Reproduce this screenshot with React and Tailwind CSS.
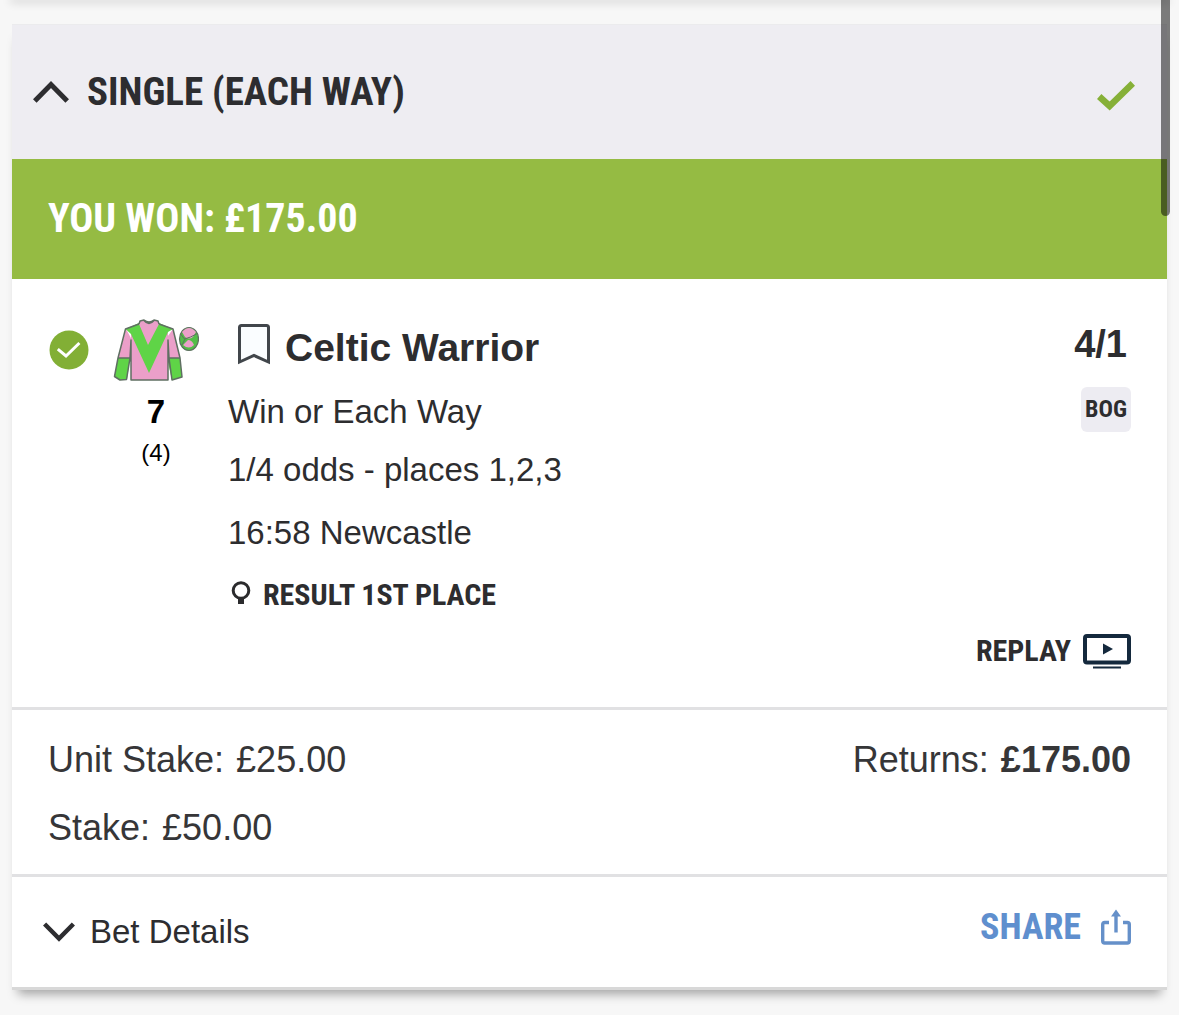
const condensed = "font-['Roboto_Condensed','Liberation_Sans_Narrow',Roboto,sans-serif] font-bold";

const Chevron = ({ className }) => (
  <svg viewBox="0 0 36 22" className={className} fill="none" stroke="currentColor" strokeWidth="5">
    <path d="M1.8 20 18 3.6 34.2 20" />
  </svg>
);

const Tick = () => (
  <svg viewBox="0 0 38 30" className="h-[30px] w-[38px]" fill="none" stroke="#86b038" strokeWidth="6.5">
    <path d="M2.2 15.5 12.6 25 35.8 2.4" />
  </svg>
);

const WonIcon = () => (
  <svg viewBox="0 0 40 40" className="size-10">
    <circle cx="20" cy="20" r="19.5" fill="#82af35" />
    <path d="M8.8 19.2 17 26 30.4 13" fill="none" stroke="#fff" strokeWidth="3" />
  </svg>
);

const Silks = () => (
  <svg viewBox="0 0 86 62" className="h-[62px] w-[86px]" strokeLinejoin="round">
    {/* sleeves and cuffs */}
    <path d="M13 10 5 39h12l2-18zM60 10l7 29H54l-2-18z" fill="#eb9fc9" />
    <path d="M5 39h12l-3 21.500-7 .5-5.500-3.500zM54 39h13l2 19-10 3z" fill="#5fd447" />
    {/* body with the chevron */}
    <path d="M18 10 26 4h20l9 6v51H18z" fill="#eb9fc9" />
    <path d="M12.500 10 26 4l9 20L46 4l14 6-5 3-19 41L18 15z" fill="#5fd447" />
    <path d="m27 2 4-1q5 4 10 0l4 1 1 3-11 21L26 5z" fill="#eb9fc9" />
    <g fill="none" stroke="#5f6f62" strokeWidth="1.5">
      <path d="M26 5 12.500 10 5 39 1.500 57.500l5.500 3.500 6.500-.5L17 39l1-18v40h37V21l1 18 3 22 10-3-2-19-7-29-14-5" />
      <path d="m26 5 1-3 4-1q5 4 10 0l4 1 1 3M31 1.500q5 6 10 0M5 39h12M55 39h12" />
    </g>
    {/* cap */}
    <ellipse cx="76" cy="20" rx="9.500" ry="11.500" fill="#52bd47" stroke="#5f6f62" strokeWidth="1.2" />
    <path d="M69 13q7-8 14 0l-3 5q-4 3-8 0zM70 26l5-5q4 0 6 5-5 5-11 0z" fill="#eb9fc9" />
    <path d="m67.500 15 4 5 6-2 6-3M72 20l-3 6" fill="none" stroke="#5f6f62" strokeWidth="1" />
  </svg>
);

const Bookmark = () => (
  <svg viewBox="0 0 34 42" className="h-[42px] w-[34px]" fill="#fafdff" stroke="#41464b" strokeWidth="3">
    <path d="M2.500 39V4.500q0-2 2-2h25q2 0 2 2V39L17 32.500z" />
  </svg>
);

const ResultPin = () => (
  <svg viewBox="0 0 20 24" className="mb-1 h-6 w-5" fill="none" stroke="#2b2b2d">
    <circle cx="10" cy="9.500" r="7.8" strokeWidth="3" />
    <path d="M10 17v6" strokeWidth="6" />
  </svg>
);

const ReplayIcon = () => (
  <svg viewBox="0 0 48 36" className="h-9 w-12" fill="none" stroke="#14293d">
    <rect x="2" y="3" width="44" height="26.500" rx="2" strokeWidth="4" />
    <path d="M10 34.500h28" strokeWidth="2" />
    <path d="m20 10.500 10 5.500-10 5.500z" fill="#14293d" stroke="none" />
  </svg>
);

const ShareIcon = () => (
  <svg viewBox="0 0 30 36" className="h-9 w-[30px]" fill="none" stroke="#6590c9" strokeWidth="3.400">
    <path d="M8 13.500H3.700q-2 0-2 2V32q0 2 2 2h22.600q2 0 2-2V15.500q0-2-2-2H22M15 23.500V6" />
    <path d="M15 .5 20 7.500H10z" fill="#6590c9" stroke="none" />
  </svg>
);

const Amount = ({ label, value, strong }) => (
  <div className="flex gap-3">
    <dt>{label}</dt>
    <dd className={strong ? "font-bold" : ""}>{value}</dd>
  </div>
);

const Selection = () => (
  <section className="grid grid-cols-[40px_86px_1fr_auto] border-b-3 border-[#e1e1e3] pt-10 pr-9 pb-[38px] pl-[37px]">
    <div className="pt-[11px]">
      <WonIcon />
    </div>

    <div className="ml-6 flex w-[86px] flex-col items-center text-black">
      <Silks />
      <p className="text-[33px] leading-[62px] font-bold">7</p>
      <p className="text-2xl leading-5">(4)</p>
    </div>

    <div className="ml-[53px] text-[33px] text-[#2d2d2f]">
      <div className="flex items-start gap-3.5 pt-1 pl-[9px]">
        <button type="button" aria-label="Save selection">
          <Bookmark />
        </button>
        <h3 className="text-[39px] leading-[50px] font-bold">Celtic Warrior</h3>
      </div>
      <p className="pt-2 leading-[62px]">Win or Each Way</p>
      <p className="leading-[54px]">1/4 odds - places 1,2,3</p>
      <p className="pt-1 leading-[64px]">16:58 Newcastle</p>
      <div className="flex items-center gap-3 pl-[3px]">
        <ResultPin />
        <p className={`${condensed} text-[30px] leading-[60px]`}>RESULT 1ST PLACE</p>
      </div>
    </div>

    <div className="flex flex-col items-end text-[#2d2d2f]">
      <p className="pr-1 text-[38px] leading-[50px] font-bold">4/1</p>
      <span className={`${condensed} mt-[18px] rounded-md bg-[#edecf2] px-1 text-2xl leading-[45px]`}>BOG</span>
    </div>

    <button type="button" className={`${condensed} col-span-4 mt-2 flex items-center gap-3 justify-self-end text-[30px] leading-9 text-[#2d2d2f]`}>
      REPLAY
      <ReplayIcon />
    </button>
  </section>
);

const App = () => {
  return (
    <div className="relative min-h-screen bg-[#f7f7f7] font-['Liberation_Sans',Arial,sans-serif]">
      <div className="mx-3 shadow-[0_0_10px_2px_rgba(0,0,0,0.2)]" />
      <div className="px-3 pt-6">
        <main className="border-b-3 border-[#d8d8d8] bg-white shadow-[0_10px_10px_-6px_rgba(0,0,0,0.35)]">
          <header className="border-t border-[#ebebed] bg-[#eeedf2]">
            <button type="button" aria-expanded="true" className="flex w-full items-center gap-[18px] pr-8 pl-[21px] text-[#2d2d30]">
              <Chevron className="h-[22px] w-9" />
              <span className={`${condensed} flex-1 text-left text-[39px] leading-[134px]`}>SINGLE (EACH WAY)</span>
              <span className="pt-2">
                <Tick />
              </span>
            </button>
          </header>

          <p className={`${condensed} bg-[#95bb43] pl-9 text-[40px] leading-[120px] text-white`}>YOU WON: £175.00</p>

          <Selection />

          <dl className="flex justify-between border-b-3 border-[#e1e1e3] px-9 pt-4 pb-3 text-[36px] leading-[68px] text-[#363638]">
            <div>
              <Amount label="Unit Stake:" value="£25.00" />
              <Amount label="Stake:" value="£50.00" />
            </div>
            <Amount label="Returns:" value="£175.00" strong />
          </dl>

          <footer className="flex items-start justify-between pr-9 pl-[31px] text-[#2d2d30]">
            <button type="button" aria-expanded="false" className="flex items-center gap-[15px] text-[33px] leading-[110px]">
              <Chevron className="h-5 w-8 rotate-180" />
              Bet Details
            </button>
            <button type="button" className={`${condensed} flex items-center gap-5 text-[36px] leading-[100px] text-[#5f8fce]`}>
              SHARE
              <ShareIcon />
            </button>
          </footer>
        </main>
      </div>

      {/* scroll thumb */}
      <div className="absolute top-0 right-[9px] h-[216px] w-[9px] rounded-b-full bg-black/50" />
    </div>
  );
};

export default App;
